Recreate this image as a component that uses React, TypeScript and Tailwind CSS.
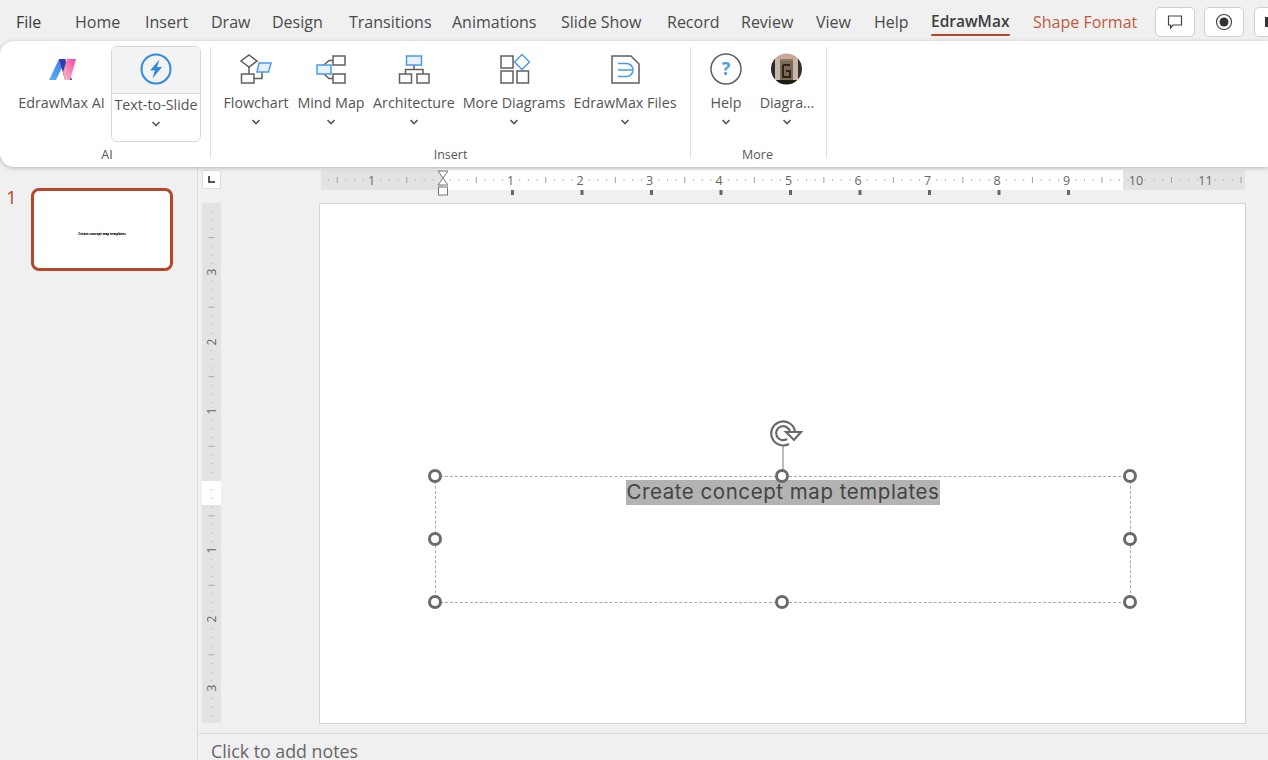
import type { ReactNode } from "react";

const tabs = [
  { label: "File", width: "w-[59px]", color: "text-[#3a3a3a]" },
  { label: "Home", width: "w-[70px]", color: "text-[#4a4a4a]" },
  { label: "Insert", width: "w-[66px]", color: "text-[#4a4a4a]" },
  { label: "Draw", width: "w-[61px]", color: "text-[#4a4a4a]" },
  { label: "Design", width: "w-[77px]", color: "text-[#4a4a4a]" },
  { label: "Transitions", width: "w-[103px]", color: "text-[#4a4a4a]" },
  { label: "Animations", width: "w-[109px]", color: "text-[#4a4a4a]" },
  { label: "Slide Show", width: "w-[106px]", color: "text-[#4a4a4a]" },
  { label: "Record", width: "w-[74px]", color: "text-[#4a4a4a]" },
  { label: "Review", width: "w-[75px]", color: "text-[#4a4a4a]" },
  { label: "View", width: "w-[58px]", color: "text-[#4a4a4a]" },
  { label: "Help", width: "w-[57px]", color: "text-[#4a4a4a]" },
];

const BLUE = "#4a9be8";
const GREY = "#5f5f5f";

function Chevron() {
  return (
    <svg width="10" height="6" viewBox="0 0 10 6" fill="none" stroke="#555" strokeWidth="1.6">
      <path d="M1.5 1 L5 4.5 L8.5 1" />
    </svg>
  );
}

function Icon({ children }: { children: ReactNode }) {
  return (
    <svg width="36" height="36" viewBox="0 0 36 36" fill="none" strokeWidth="1.5">
      {children}
    </svg>
  );
}

function RibbonButton({ label, width, icon, menu = true }: { label: string; width: string; icon: ReactNode; menu?: boolean }) {
  return (
    <div className={`${width} flex shrink-0 flex-col items-center pt-1`}>
      <div className="h-[42px]">{icon}</div>
      <div className="h-5 whitespace-nowrap text-center leading-5">{label}</div>
      {menu && (
        <div className="flex h-[18px] items-center">
          <Chevron />
        </div>
      )}
    </div>
  );
}

function Group({ label, width, labelClass = "", children }: { label: string; width: string; labelClass?: string; children: ReactNode }) {
  return (
    <div className={`${width} relative flex h-[111px] shrink-0 flex-col border-r border-[#e2e2e2]`}>
      <div className="flex flex-1">{children}</div>
      <div className={`${labelClass} -mb-[5px] text-center text-[12.5px] leading-4 text-[#555]`}>{label}</div>
    </div>
  );
}

const flowchartIcon = (
  <Icon>
    <g stroke={GREY}>
      <path d="M11 4 L19 10 L11 16 L3 10 Z" />
      <rect x="3.5" y="23" width="12.5" height="9" />
      <path d="M11 16 V23 M16 27.5 H24 V21" />
    </g>
    <path d="M21 12 H33 L30.5 21 H19 Z" stroke={BLUE} fill="#e6f1fc" />
  </Icon>
);

const mindMapIcon = (
  <Icon>
    <g stroke={GREY}>
      <rect x="20" y="5" width="12" height="9" />
      <rect x="20" y="23" width="12" height="9" />
      <path d="M20 9.5 H16 L11 14 M20 27.5 H16 L11 23" />
    </g>
    <rect x="4" y="14" width="14" height="9" stroke={BLUE} fill="#e6f1fc" />
  </Icon>
);

const architectureIcon = (
  <Icon>
    <g stroke={GREY}>
      <rect x="3.5" y="23" width="12" height="9" />
      <rect x="21" y="23" width="12" height="9" />
      <path d="M18 14 V18.5 M9.5 23 V18.5 H27 V23" />
    </g>
    <rect x="10.5" y="5" width="15" height="9" stroke={BLUE} fill="#e6f1fc" />
  </Icon>
);

const moreDiagramsIcon = (
  <Icon>
    <g stroke={GREY}>
      <rect x="5" y="5" width="12" height="12" />
      <rect x="5" y="20" width="12" height="12" />
      <rect x="21" y="20" width="11.5" height="12" />
    </g>
    <path d="M26 3.5 L33.5 11 L26 18.5 L18.5 11 Z" stroke={BLUE} />
  </Icon>
);

const filesIcon = (
  <Icon>
    <path d="M5 5 H24 L32 13 V32 H5 Z" stroke={GREY} />
    <path d="M11 12.5 H19.5 A6.5 6.5 0 0 1 19.5 25.5 H11 M11 19 H25" stroke={BLUE} />
  </Icon>
);

const helpIcon = (
  <Icon>
    <circle cx="18" cy="18" r="15" stroke={GREY} />
    <text x="18" y="24" textAnchor="middle" fontSize="18" fontWeight="700" fill={BLUE} stroke="none" fontFamily="'Open Sans', sans-serif">
      ?
    </text>
  </Icon>
);

const avatarIcon = (
  <svg width="36" height="36" viewBox="0 0 36 36">
    <defs>
      <clipPath id="avatar">
        <circle cx="17.5" cy="18" r="15.5" />
      </clipPath>
      <filter id="soft">
        <feGaussianBlur stdDeviation="0.7" />
      </filter>
    </defs>
    <g clipPath="url(#avatar)">
      <g filter="url(#soft)">
        <rect width="36" height="36" fill="#8c7a68" />
        <rect y="0" width="36" height="8" fill="#c9a79a" />
        <rect x="0" y="8" width="6" height="22" fill="#2f2a25" />
        <rect x="6" y="8" width="5" height="22" fill="#c4b8a8" />
        <rect x="24" y="8" width="5" height="22" fill="#c4b8a8" />
        <rect x="29" y="8" width="7" height="22" fill="#38312a" />
        <rect x="11" y="10" width="13" height="20" fill="#7d6a54" />
        <path d="M14 14 H21 M14 14 V26 H21 V20 H17" stroke="#2e241a" strokeWidth="2" fill="none" />
        <rect y="29" width="36" height="7" fill="#1f1b17" />
      </g>
    </g>
  </svg>
);

const edrawLogo = (
  <svg width="36" height="36" viewBox="0 0 36 36">
    <defs>
      <linearGradient id="leftLeg" x1="0" y1="1" x2="1" y2="0">
        <stop offset="0" stopColor="#58b5f5" />
        <stop offset="1" stopColor="#3f6fe8" />
      </linearGradient>
      <linearGradient id="rightLeg" x1="0" y1="1" x2="1" y2="0">
        <stop offset="0" stopColor="#f7c4c0" />
        <stop offset="1" stopColor="#f540a8" />
      </linearGradient>
    </defs>
    <path d="M5 29 L15 8 H22 L12 29 Z" fill="url(#leftLeg)" />
    <path d="M15 8 H21 L28 29 H21 Z" fill="#2b3fa8" />
    <path d="M23 8 H32 L26 29 H21 L19 21 Z" fill="url(#rightLeg)" />
  </svg>
);

function HorizontalRuler() {
  const origin = 120;
  const nums = ["1", "2", "3", "4", "5", "6", "7", "8", "9", "10", "11"];
  const ticks: number[] = [];
  for (let k = -13; k <= 92; k++) ticks.push(k);
  const labels = [{ x: origin - 69.5, t: "1" }].concat(nums.map((t, i) => ({ x: origin + (i + 1) * 69.5, t })));
  return (
    <svg width="924" height="26" viewBox="0 0 924 26" className="shrink-0">
      <rect width="924" height="20" fill="#e3e3e3" />
      <rect x="122" width="680" height="20" fill="#ffffff" />
      {ticks.map((k) =>
        k % 8 === 0 ? null : (
          <rect
            key={k}
            x={origin + k * 8.69}
            y={k % 4 === 0 ? 7 : 9}
            width="1"
            height={k % 4 === 0 ? 6 : 2}
            fill={k % 4 === 0 ? "#a0a0a0" : "#bdbdbd"}
          />
        ),
      )}
      {labels.map((n) => (
        <text key={n.x} x={n.x} y="15" textAnchor="middle" fontSize="12.5" fill="#666" fontFamily="'Open Sans', sans-serif">
          {n.t}
        </text>
      ))}
      {[1, 2, 3, 4, 5, 6, 7, 8, 9].map((i) => (
        <rect key={i} x={origin + i * 69.5 + 0.5} y="20" width="3" height="5" fill="#666" />
      ))}
      <path d="M117 1 H127 L122 8 L127 15 H117 L122 8 Z" fill="#fff" stroke="#777" />
      <rect x="117.5" y="17" width="9" height="8" fill="#fff" stroke="#777" />
    </svg>
  );
}

function VerticalRuler() {
  const origin = 277.5;
  const nums = [
    { y: 69, t: "3" },
    { y: 139, t: "2" },
    { y: 208, t: "1" },
    { y: 347, t: "1" },
    { y: 416, t: "2" },
    { y: 485, t: "3" },
  ];
  const ticks: number[] = [];
  for (let k = -31; k <= 27; k++) ticks.push(k);
  return (
    <svg width="19" height="520" viewBox="0 0 19 520" className="shrink-0">
      <rect width="19" height="520" fill="#e3e3e3" />
      <rect y="278" width="19" height="24" fill="#ffffff" />
      {ticks.map((k) =>
        k % 8 === 0 ? null : (
          <rect
            key={k}
            x={k % 4 === 0 ? 6.5 : 8.5}
            y={origin + k * 8.69}
            width={k % 4 === 0 ? 6 : 2}
            height="1"
            fill={k % 4 === 0 ? "#a8a8a8" : "#c0c0c0"}
          />
        ),
      )}
      {nums.map((n) => (
        <text
          key={n.y}
          x="9.5"
          y={n.y}
          textAnchor="middle"
          dominantBaseline="central"
          fontSize="12"
          fill="#666"
          fontFamily="'Open Sans', sans-serif"
          transform={`rotate(-90 9.5 ${n.y})`}
        >
          {n.t}
        </text>
      ))}
    </svg>
  );
}

function Handle({ position }: { position: string }) {
  return <div className={`${position} absolute h-[14px] w-[14px] rounded-full border-[3px] border-[#6a6a6a] bg-white`} />;
}

export default function App() {
  return (
    <div className="flex h-[760px] w-[1268px] flex-col overflow-hidden bg-[#f0f0f0] font-['Open_Sans',sans-serif] text-[14.3px] text-[#555]">
      {/* Tabs */}
      <div className="flex h-[41px] shrink-0 items-center pl-4">
        {tabs.map((tab) => (
          <div key={tab.label} className={`${tab.width} ${tab.color} shrink-0 whitespace-nowrap pt-[3px] text-[16px]`}>
            {tab.label}
          </div>
        ))}
        <div className="relative w-[102px] shrink-0 whitespace-nowrap pt-[3px] text-[15.5px] font-semibold text-[#3d3d3d]">
          EdrawMax
          <div className="absolute left-0 top-[27px] h-[2px] w-[79px] rounded-full bg-[#b7472a]" />
        </div>
        <div className="w-[122px] shrink-0 whitespace-nowrap pt-[3px] text-[16px] text-[#c0583f]">Shape Format</div>
        <div className="mt-[2px] flex gap-[9px]">
          <div className="flex h-[30px] w-[40px] shrink-0 items-center justify-center rounded-[5px] border border-[#cfcfcf] bg-white">
            <svg width="16" height="16" viewBox="0 0 16 16" fill="none" stroke="#444" strokeWidth="1.2">
              <path d="M1.5 2 H14.5 V11 H6 L3.5 14 V11 H1.5 Z" />
            </svg>
          </div>
          <div className="flex h-[30px] w-[40px] shrink-0 items-center justify-center rounded-[5px] border border-[#cfcfcf] bg-white">
            <svg width="18" height="18" viewBox="0 0 18 18">
              <circle cx="9" cy="9" r="7.5" fill="none" stroke="#444" strokeWidth="1.2" />
              <circle cx="9" cy="9" r="4.5" fill="#333" />
            </svg>
          </div>
          <div className="ml-px flex h-[30px] w-[40px] shrink-0 items-center rounded-[5px] border border-[#cfcfcf] bg-white pl-[10px]">
            <div className="h-[10px] w-[3px] bg-[#333]" />
          </div>
        </div>
      </div>

      {/* Ribbon */}
      <div className="relative z-10 flex h-[126px] shrink-0 rounded-l-[14px] bg-white pt-[6px] shadow-[0_1px_4px_rgba(0,0,0,0.25)]">
        <Group label="AI" width="w-[211px]" labelClass="pl-1">
          <div className="flex pl-3">
            <RibbonButton label="EdrawMax AI" width="w-[99px]" icon={edrawLogo} menu={false} />
            <div className="-mt-px flex h-[96px] w-[90px] shrink-0 flex-col items-center rounded-md border border-[#d8d8d8]">
              <div className="flex h-[47px] w-full items-center justify-center rounded-t-md border-b border-[#d8d8d8] bg-[#f3f3f3] pb-[2px]">
                <svg width="32" height="32" viewBox="0 0 32 32" fill="none">
                  <circle cx="16" cy="16" r="14.5" stroke="#2f8be0" strokeWidth="2" />
                  <path d="M19.5 6.5 L10 17.5 H14.8 L12.5 25.5 L22 14 H17 Z" fill="#2f8be0" />
                </svg>
              </div>
              <div className="h-[22px] whitespace-nowrap leading-[22px]">Text-to-Slide</div>
              <div className="flex h-[16px] items-center">
                <Chevron />
              </div>
            </div>
          </div>
        </Group>
        <Group label="Insert" width="w-[480px]">
          <div className="flex pl-2">
            <RibbonButton label="Flowchart" width="w-[74px]" icon={flowchartIcon} />
            <RibbonButton label="Mind Map" width="w-[76px]" icon={mindMapIcon} />
            <RibbonButton label="Architecture" width="w-[90px]" icon={architectureIcon} />
            <RibbonButton label="More Diagrams" width="w-[110px]" icon={moreDiagramsIcon} />
            <RibbonButton label="EdrawMax Files" width="w-[112px]" icon={filesIcon} />
          </div>
        </Group>
        <Group label="More" width="w-[136px]" labelClass="pr-0.5">
          <div className="flex pl-[5px]">
            <RibbonButton label="Help" width="w-[60px]" icon={helpIcon} />
            <RibbonButton label="Diagra..." width="w-[62px]" icon={avatarIcon} />
          </div>
        </Group>
      </div>

      {/* Body */}
      <div className="flex min-h-0 flex-1">
        <div className="flex w-[198px] shrink-0 items-start gap-[15px] border-r border-[#dcdcdc] pl-[6px] pt-[21px]">
          <div className="w-[10px] text-[19px] leading-[19px] text-[#c0492b]">1</div>
          <div className="flex h-[83px] w-[142px] shrink-0 items-center justify-center rounded-lg border-[3px] border-[#b7472a] bg-white">
            <div className="mt-[10px] whitespace-nowrap text-[3px] font-black leading-none text-black">Create concept map templates</div>
          </div>
        </div>

        <div className="flex min-w-0 flex-1 flex-col">
          <div className="flex-1 pl-1 pt-[3px]">
            <div className="flex items-start">
              <div className="flex h-[19px] w-[19px] shrink-0 items-center justify-center border border-[#dedede] bg-white">
                <svg width="9" height="9" viewBox="0 0 9 9" fill="none" stroke="#555" strokeWidth="2">
                  <path d="M2 1 V7 H8" />
                </svg>
              </div>
              <div className="ml-[100px]">
                <HorizontalRuler />
              </div>
            </div>
            <div className="mt-[7px] flex items-start">
              <VerticalRuler />
              <div className="relative ml-[98px] h-[521px] w-[927px] shrink-0 border border-[#d4d4d4] bg-white">
                {/* selected text box */}
                <div className="absolute left-[115px] top-[272px] flex h-[127px] w-[696px] justify-center border border-dashed border-[#a8a8a8]">
                  <div className="mt-[3px] h-[25px] whitespace-nowrap bg-[#b3b3b3] px-[1px] font-['Inter',sans-serif] text-[20.5px] leading-[24px] tracking-[0.55px] text-[#444]">
                    Create concept map templates
                  </div>
                </div>
                <div className="absolute left-[462px] top-[242px] h-[25px] w-[2px] bg-[#bdbdbd]" />
                <svg className="absolute left-[448px] top-[213px]" width="36" height="34" viewBox="0 0 36 34" fill="none" stroke="#6a6a6a" strokeWidth="2.2">
                  <path d="M21 27 A12 12 0 1 1 27 14" />
                  <path d="M19 22 A7 7 0 1 1 22 15" />
                  <path d="M18 15 H33 L26 23 Z" fill="#fff" />
                </svg>
                <Handle position="left-[108px] top-[265px]" />
                <Handle position="left-[455px] top-[265px]" />
                <Handle position="left-[803px] top-[265px]" />
                <Handle position="left-[108px] top-[328px]" />
                <Handle position="left-[803px] top-[328px]" />
                <Handle position="left-[108px] top-[391px]" />
                <Handle position="left-[455px] top-[391px]" />
                <Handle position="left-[803px] top-[391px]" />
              </div>
            </div>
          </div>
          <div className="h-[27px] shrink-0 border-t border-[#dcdcdc] pl-[13px] pt-[9px] text-[17.8px] leading-[16px] text-[#666]">
            Click to add notes
          </div>
        </div>
      </div>
    </div>
  );
}
